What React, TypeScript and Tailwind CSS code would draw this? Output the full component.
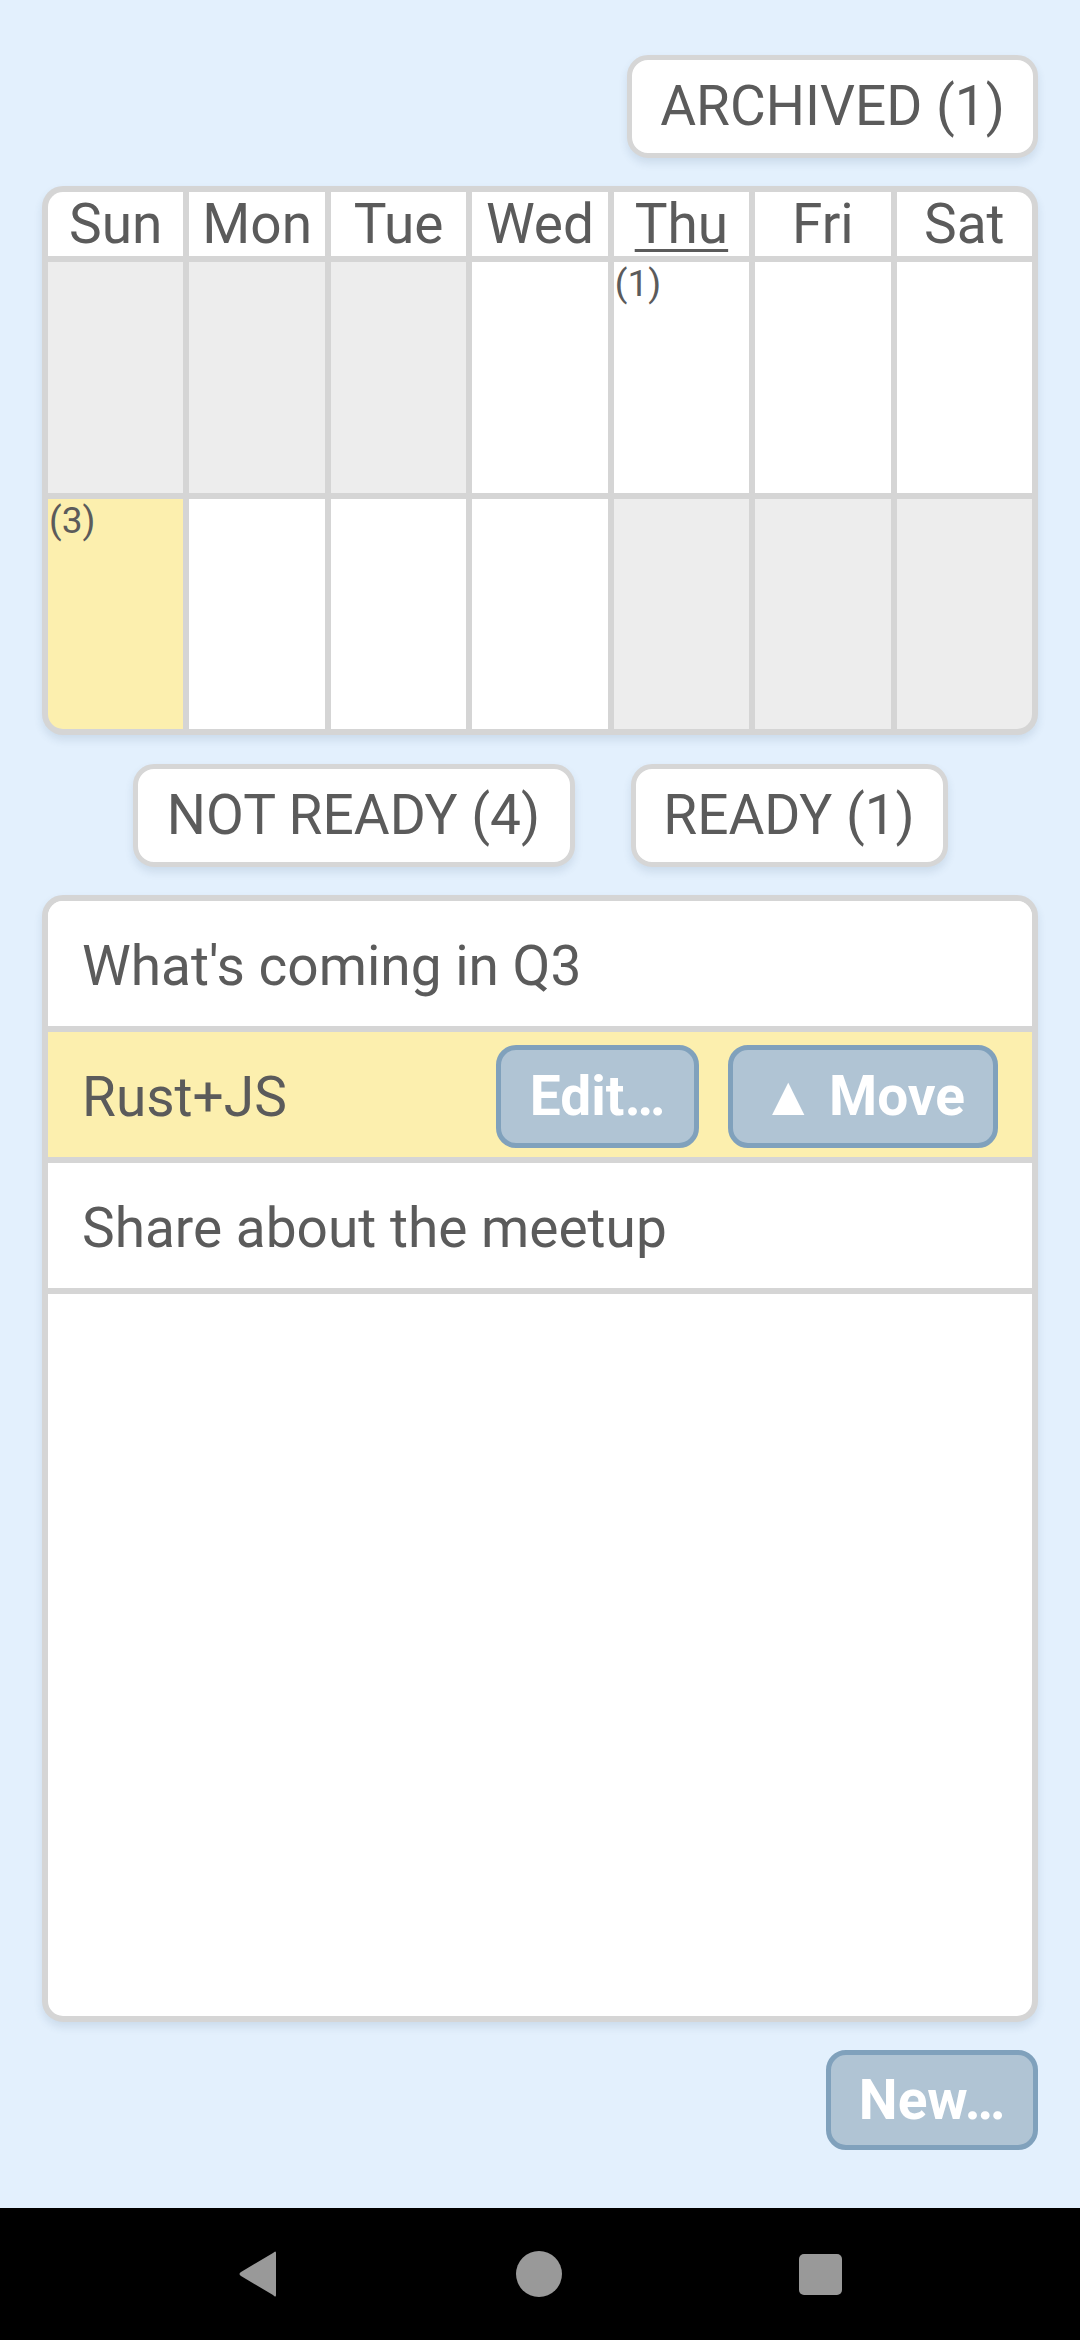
import React from 'react';

// --- Calendar data ---
const days = ['Sun', 'Mon', 'Tue', 'Wed', 'Thu', 'Fri', 'Sat'];

type Cell = { tone: 'gray' | 'white' | 'yellow'; count?: number };

const weeks: Cell[][] = [
    [
        { tone: 'gray' },
        { tone: 'gray' },
        { tone: 'gray' },
        { tone: 'white' },
        { tone: 'white', count: 1 },
        { tone: 'white' },
        { tone: 'white' },
    ],
    [
        { tone: 'yellow', count: 3 },
        { tone: 'white' },
        { tone: 'white' },
        { tone: 'white' },
        { tone: 'gray' },
        { tone: 'gray' },
        { tone: 'gray' },
    ],
];

const toneClass = {
    gray: 'bg-[#ededed]',
    white: 'bg-white',
    yellow: 'bg-[#fcefae]',
};

const PillButton: React.FC<{ label: string; width: string }> = ({ label, width }) => (
    <button
        className={`${width} h-[103px] flex items-center justify-center bg-white border-[5px] border-[#d6d6d6] rounded-[21px] shadow-[0_5px_8px_rgba(40,70,110,0.12)] text-[55px] leading-none text-[#5b5b5b]`}
    >
        {label}
    </button>
);

const ActionButton: React.FC<{ label: string; width: string; height?: string }> = ({ label, width, height = 'h-[103px]' }) => (
    <button
        className={`${width} ${height} flex items-center justify-center bg-[#b0c4d4] border-[5px] border-[#80a1bc] rounded-[20px] text-[55px] font-bold leading-none text-white`}
    >
        {label}
    </button>
);

const Calendar: React.FC = () => (
    <div className="mt-[28px] grid grid-cols-7 gap-[6px] p-[6px] bg-[#d5d5d5] rounded-[21px] shadow-[0_5px_8px_rgba(40,70,110,0.12)]">
        {days.map((d, i) => (
            <div
                key={d}
                className={`h-[64px] flex items-center justify-center bg-white text-[55px] leading-none text-[#5b5b5b] ${i === 0 ? 'rounded-tl-[15px]' : ''} ${i === 6 ? 'rounded-tr-[15px]' : ''}`}
            >
                {d === 'Thu' ? (
                    <span className="underline decoration-[3px] underline-offset-[6px]">{d}</span>
                ) : (
                    d
                )}
            </div>
        ))}
        {weeks.map((week, wi) =>
            week.map((cell, ci) => (
                <div
                    key={`${wi}-${ci}`}
                    className={`${wi === 0 ? 'h-[231px]' : 'h-[230px]'} ${toneClass[cell.tone]} ${wi === 1 && ci === 0 ? 'rounded-bl-[15px]' : ''} ${wi === 1 && ci === 6 ? 'rounded-br-[15px]' : ''}`}
                >
                    {cell.count !== undefined && (
                        <div className="text-[37px] leading-[43px] text-[#5b5b5b] pl-[1px]">({cell.count})</div>
                    )}
                </div>
            ))
        )}
    </div>
);

const items = ["What's coming in Q3", 'Rust+JS', 'Share about the meetup'];

const ItemList: React.FC = () => (
    <div className="mt-[28px] h-[1127px] bg-white border-[6px] border-[#d5d5d5] rounded-[21px] overflow-hidden shadow-[0_5px_8px_rgba(40,70,110,0.12)]">
        {items.map((item) => {
            const selected = item === 'Rust+JS';
            return (
                <div
                    key={item}
                    className={`h-[131px] flex items-center pl-[34px] pr-[34px] border-b-[6px] border-[#d5d5d5] ${selected ? 'bg-[#fcefae]' : 'bg-white'}`}
                >
                    <span className="flex-1 pt-[5px] text-[55px] leading-none text-[#5b5b5b]">{item}</span>
                    {selected && (
                        <div className="flex items-center gap-[29px] pt-[4px]">
                            <ActionButton label="Edit…" width="w-[203px]" />
                            <ActionButton label="▲ Move" width="w-[270px]" />
                        </div>
                    )}
                </div>
            );
        })}
    </div>
);

const NavBar: React.FC = () => (
    <div className="mt-auto h-[132px] bg-black flex items-center justify-center gap-[237px]">
        <svg width="41" height="46" viewBox="0 0 41 46">
            <path d="M38 2 L38 44 Q38 47 35 44 L3 25 Q0 23 3 21 L35 2 Q38 -1 38 2 Z" fill="#999999" />
        </svg>
        <div className="w-[46px] h-[46px] rounded-full bg-[#999999]" />
        <div className="w-[43px] h-[41px] rounded-[5px] bg-[#999999]" />
    </div>
);

export default function App() {
    return (
        <div className="h-[2340px] flex flex-col bg-[#e3f0fd] [font-family:Roboto,'Noto_Sans',sans-serif]">
            <div className="px-[42px] pt-[55px] flex flex-col">
                {/* Archived */}
                <div className="flex justify-end">
                    <PillButton label="ARCHIVED (1)" width="w-[411px]" />
                </div>

                <Calendar />

                {/* Status filters */}
                <div className="mt-[29px] flex justify-center gap-[56px]">
                    <PillButton label="NOT READY (4)" width="w-[442px]" />
                    <PillButton label="READY (1)" width="w-[317px]" />
                </div>

                <ItemList />

                <div className="mt-[28px] flex justify-end">
                    <ActionButton label="New…" width="w-[212px]" height="h-[100px]" />
                </div>
            </div>
            <NavBar />
        </div>
    );
}
